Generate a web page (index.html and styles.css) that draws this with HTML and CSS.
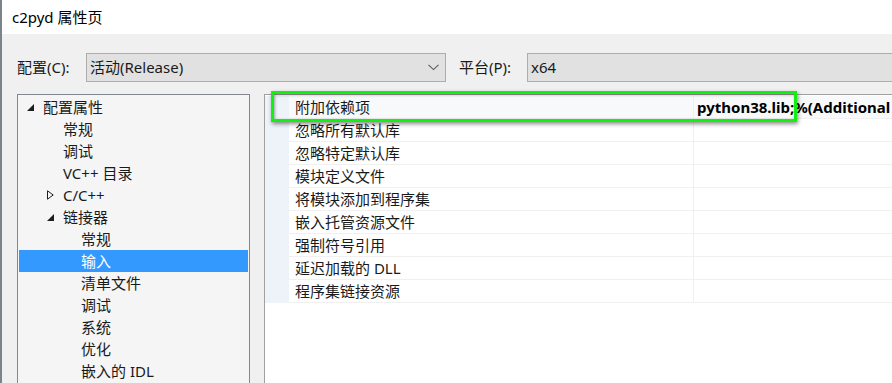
FILE: index.html
```html
<!DOCTYPE html>
<html lang="zh-CN">
<head>
  <meta charset="UTF-8">
  <title>c2pyd 属性页</title>
  <link rel="stylesheet" href="styles.css">
</head>
<body>
  <div class="window">
    <div class="titlebar">c2pyd 属性页</div>

    <div class="dialog">
      <div class="config-row">
        <span class="field-label">配置(C):</span>
        <div class="combo combo-config">
          <span>活动(Release)</span>
          <svg class="chevron" width="11" height="7" viewBox="0 0 11 7"><path d="M0.5 0.8 L5.5 5.6 L10.5 0.8" fill="none" stroke="#5a5a5a" stroke-width="1.1"/></svg>
        </div>
        <span class="field-label platform-label">平台(P):</span>
        <div class="combo combo-platform">
          <span>x64</span>
        </div>
      </div>

      <div class="panes">
        <ul class="tree">
          <li class="lvl0"><span class="arrow"><svg width="7" height="7" viewBox="0 0 7 7"><path d="M7 0 L7 7 L0 7 Z" fill="#1e1e1e"/></svg></span>配置属性</li>
          <li class="lvl1"><span class="arrow"></span>常规</li>
          <li class="lvl1"><span class="arrow"></span>调试</li>
          <li class="lvl1"><span class="arrow"></span>VC++ 目录</li>
          <li class="lvl1"><span class="arrow"><svg width="7" height="10" viewBox="0 0 7 10"><path d="M0.5 0.8 L6.2 5 L0.5 9.2 Z" fill="none" stroke="#1e1e1e" stroke-width="1"/></svg></span>C/C++</li>
          <li class="lvl1"><span class="arrow"><svg width="7" height="7" viewBox="0 0 7 7"><path d="M7 0 L7 7 L0 7 Z" fill="#1e1e1e"/></svg></span>链接器</li>
          <li class="lvl2"><span class="arrow"></span>常规</li>
          <li class="lvl2 selected"><span class="arrow"></span>输入</li>
          <li class="lvl2"><span class="arrow"></span>清单文件</li>
          <li class="lvl2"><span class="arrow"></span>调试</li>
          <li class="lvl2"><span class="arrow"></span>系统</li>
          <li class="lvl2"><span class="arrow"></span>优化</li>
          <li class="lvl2"><span class="arrow"></span>嵌入的 IDL</li>
        </ul>

        <div class="grid">
          <div class="grid-row first">
            <div class="cat"></div>
            <div class="name">附加依赖项</div>
            <div class="value bold">python38.lib;%(Additional</div>
          </div>
          <div class="grid-row">
            <div class="cat"></div>
            <div class="name">忽略所有默认库</div>
            <div class="value"></div>
          </div>
          <div class="grid-row">
            <div class="cat"></div>
            <div class="name">忽略特定默认库</div>
            <div class="value"></div>
          </div>
          <div class="grid-row">
            <div class="cat"></div>
            <div class="name">模块定义文件</div>
            <div class="value"></div>
          </div>
          <div class="grid-row">
            <div class="cat"></div>
            <div class="name">将模块添加到程序集</div>
            <div class="value"></div>
          </div>
          <div class="grid-row">
            <div class="cat"></div>
            <div class="name">嵌入托管资源文件</div>
            <div class="value"></div>
          </div>
          <div class="grid-row">
            <div class="cat"></div>
            <div class="name">强制符号引用</div>
            <div class="value"></div>
          </div>
          <div class="grid-row">
            <div class="cat"></div>
            <div class="name">延迟加载的 DLL</div>
            <div class="value"></div>
          </div>
          <div class="grid-row">
            <div class="cat"></div>
            <div class="name">程序集链接资源</div>
            <div class="value"></div>
          </div>
        </div>
      </div>
    </div>

    <div class="highlight"></div>
  </div>
</body>
</html>
```

FILE: styles.css
```css
* {
  box-sizing: border-box;
}

html, body {
  margin: 0;
  padding: 0;
}

body {
  width: 892px;
  height: 383px;
  overflow: hidden;
  font-family: "Noto Sans", "Noto Sans CJK SC", sans-serif;
  font-size: 15px;
  color: #1a1a1a;
  background: #f0f0f0;
}

.window {
  position: relative;
  height: 383px;
  display: flex;
  flex-direction: column;
  border-left: 2px solid #7d838b;
  overflow: hidden;
}

.titlebar {
  height: 34px;
  line-height: 34px;
  padding-left: 10px;
  background: #ffffff;
  color: #000;
  flex-shrink: 0;
}

.dialog {
  flex: 1;
  background: #f0f0f0;
  padding: 19px 0 0 15px;
  display: flex;
  flex-direction: column;
  min-height: 0;
}

/* configuration row */
.config-row {
  display: flex;
  align-items: center;
  height: 29px;
}

.field-label {
  width: 69px;
  line-height: 29px;
}

.platform-label {
  width: 68px;
  margin-left: 13px;
}

.combo {
  height: 29px;
  background: #e1e1e1;
  border: 1px solid #adadad;
  display: flex;
  align-items: center;
  padding-left: 3px;
  line-height: 27px;
}

.combo-config {
  width: 360px;
  justify-content: space-between;
  padding-right: 6px;
}

.combo-platform {
  flex: 1;
  margin-right: -6px;
}

.chevron {
  display: block;
}

/* tree + property grid */
.panes {
  display: flex;
  gap: 14px;
  margin-top: 12px;
  flex: 1;
  min-height: 0;
}

.tree {
  width: 233px;
  margin: 0;
  padding: 1px 1px 0 1px;
  list-style: none;
  background: #f5f5f5;
  border: 1px solid #828790;
  border-bottom: none;
}

.tree li {
  height: 22px;
  line-height: 22px;
  display: flex;
  align-items: center;
  white-space: nowrap;
}

.tree .arrow {
  width: 16px;
  height: 22px;
  display: flex;
  align-items: center;
  flex-shrink: 0;
}

.tree .arrow svg {
  display: block;
}

.tree .lvl0 {
  padding-left: 8px;
}

.tree .lvl1 {
  padding-left: 28px;
}

.tree .lvl2 {
  padding-left: 46px;
}

.tree .selected {
  background: #3399ff;
  color: #ffffff;
}

.grid {
  flex: 1;
  margin-right: -10px;
  background: #ffffff;
  border-top: 1px solid #a0a0a0;
  border-left: 1px solid #a0a0a0;
  padding-top: 1px;
}

.grid-row {
  display: grid;
  grid-template-columns: 24px 405px 1fr;
  height: 23px;
  line-height: 22px;
}

.grid-row .cat {
  background: #eef3fa;
}

.grid-row .name,
.grid-row .value {
  border-bottom: 1px solid #f0f0f0;
  white-space: nowrap;
  overflow: hidden;
}

.grid-row .name {
  padding-left: 6px;
  border-right: 1px solid #f0f0f0;
}

.grid-row .value {
  padding-left: 3px;
}

.grid-row.first .name,
.grid-row.first .value {
  background: #f8f9fb;
}

.bold {
  font-weight: bold;
  color: #000;
}

/* green annotation box drawn over the first row */
.highlight {
  position: absolute;
  left: 269px;
  top: 91px;
  width: 526px;
  height: 31px;
  border: 3px solid #12f012;
  box-shadow: 1px 2px 4px rgba(0, 0, 0, 0.45), inset 1px 1px 3px rgba(0, 0, 0, 0.35);
}
```
